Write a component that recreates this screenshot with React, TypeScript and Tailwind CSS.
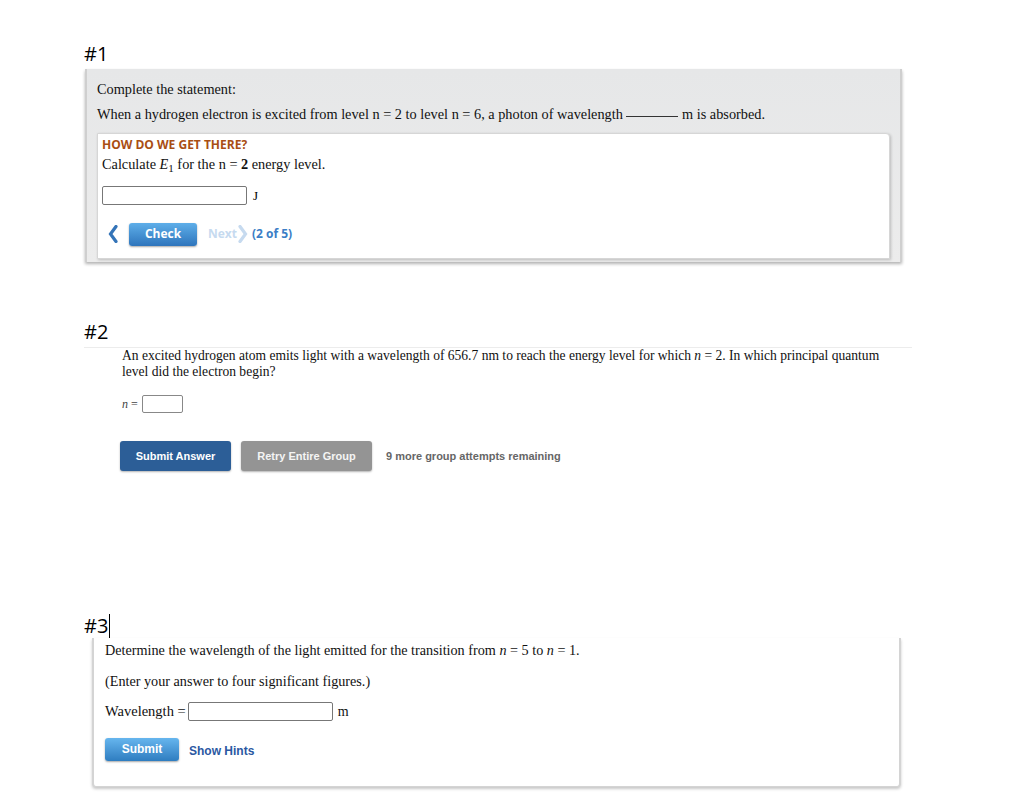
import React from "react";

const serif = { fontFamily: '"Liberation Serif", "Times New Roman", serif' };

function ChevronLeft({ color, className }: { color: string; className?: string }) {
  return (
    <svg viewBox="0 0 10 18" width="10" height="18" className={className}>
      <path d="M8 1.5 L2.5 9 L8 16.5" fill="none" stroke={color} strokeWidth="3.2" strokeLinejoin="miter" strokeLinecap="round" />
    </svg>
  );
}

function ChevronRight({ color, className }: { color: string; className?: string }) {
  return (
    <svg viewBox="0 0 10 18" width="10" height="18" className={className}>
      <path d="M2 1.5 L7.5 9 L2 16.5" fill="none" stroke={color} strokeWidth="3.2" strokeLinejoin="miter" strokeLinecap="round" />
    </svg>
  );
}

export default function App() {
  return (
    <div className="w-[1024px] h-[810px] bg-white overflow-hidden text-black" style={{ fontFamily: '"Liberation Sans", Arial, sans-serif' }}>
      {/* #1 */}
      <div className="pt-[42px] pl-[84px]">
        <div className="text-[20px] leading-[24px] font-['Open_Sans',sans-serif]">#1</div>
        <div className="mt-[3px] ml-[1px] w-[817px] h-[193px] bg-gradient-to-b from-[#e6e7e8] to-[#ececec] border-l-2 border-r-2 border-[#cfcfcf] shadow-[0_2px_3px_rgba(0,0,0,0.3)] pl-[10px] pr-[10px] pt-[10px] flex flex-col">
          <div className="text-[14.3px] leading-[20px] text-[#111]" style={serif}>Complete the statement:</div>
          <div className="mt-[5px] text-[14.3px] leading-[20px] text-[#111] whitespace-nowrap" style={serif}>
            When a hydrogen electron is excited from level n = 2 to level n = 6, a photon of wavelength{" "}
            <span className="inline-block w-[52px] border-b border-[#333] align-baseline translate-y-[-2px]"></span>{" "}
            m is absorbed.
          </div>
          <div className="mt-[9px] h-[126px] bg-white border border-[#d6d6d6] rounded-tr-[4px] shadow-[1px_1px_3px_rgba(0,0,0,0.2)] pl-[4px] pt-[4px]">
            <div className="text-[12px] leading-[14px] font-bold text-[#a94e13] font-['Open_Sans',sans-serif]">HOW DO WE GET THERE?</div>
            <div className="mt-[3px] text-[14.3px] leading-[18px] text-[#111]" style={serif}>
              Calculate <i>E</i><sub className="text-[11px]">1</sub> for the n = <b>2</b> energy level.
            </div>
            <div className="mt-[13px] flex items-center gap-[6px]">
              <div className="w-[145px] h-[19px] border border-[#777] rounded-[2px] bg-white"></div>
              <span className="text-[13px]" style={serif}>J</span>
            </div>
            <div className="mt-[17px] flex items-center">
              <ChevronLeft color="#3474b8" className="ml-[6px]" />
              <div className="ml-[11px] w-[68px] h-[23px] rounded-[3px] bg-gradient-to-b from-[#5eaee9] to-[#2e75bc] shadow-[0_1px_2px_rgba(0,0,0,0.35)] flex items-center justify-center text-white text-[12px] font-bold font-['Open_Sans',sans-serif]">
                Check
              </div>
              <span className="ml-[11px] text-[12px] font-bold text-[#c6daef] font-['Open_Sans',sans-serif]">Next</span>
              <ChevronRight color="#c6daef" className="ml-[1px]" />
              <span className="ml-[4px] text-[12px] font-bold text-[#3b7ec6] font-['Open_Sans',sans-serif]">(2 of 5)</span>
            </div>
          </div>
        </div>
      </div>

      {/* #2 */}
      <div className="mt-[58px] pl-[84px]">
        <div className="text-[20px] leading-[24px] font-['Open_Sans',sans-serif]">#2</div>
        <div className="mt-[3px] w-[828px] border-t border-[#ececec]"></div>
        <div className="pl-[38px]">
          <div className="w-[775px] text-[13.55px] leading-[16px] text-[#111]" style={serif}>
            An excited hydrogen atom emits light with a wavelength of 656.7 nm to reach the energy level for which <i>n</i> = 2. In which principal quantum level did the electron begin?
          </div>
          <div className="mt-[15px] flex items-center gap-[3px]">
            <span className="text-[12px] text-[#444]" style={serif}><i>n</i> =</span>
            <div className="ml-[1px] w-[41px] h-[18px] border border-[#888] rounded-[2px] bg-white"></div>
          </div>
          <div className="mt-[28px] flex items-center ml-[-2px]">
            <div className="w-[111px] h-[30px] rounded-[3px] bg-[#2c5e97] shadow-[0_1px_2px_rgba(0,0,0,0.3)] flex items-center justify-center text-white text-[11px] font-bold">
              Submit Answer
            </div>
            <div className="ml-[10px] w-[131px] h-[30px] rounded-[3px] bg-[#949494] shadow-[0_1px_2px_rgba(0,0,0,0.3)] flex items-center justify-center text-[#f4f4f4] text-[11px] font-bold">
              Retry Entire Group
            </div>
            <span className="ml-[14px] text-[11px] font-bold text-[#666]">9 more group attempts remaining</span>
          </div>
        </div>
      </div>

      {/* #3 */}
      <div className="mt-[143px] pl-[84px]">
        <div className="flex items-center h-[24px]">
          <span className="text-[20px] leading-[24px] font-['Open_Sans',sans-serif]">#3</span>
          <span className="ml-[1px] w-px h-[24px] bg-black"></span>
        </div>
        <div className="ml-[8px] w-[809px] h-[149px] bg-white border-l-2 border-r-2 border-b border-[#d4d4d4] rounded-b-[4px] shadow-[0_2px_3px_rgba(0,0,0,0.22)] pl-[11px] pt-[2px]">
          <div className="text-[14.2px] leading-[20px] text-[#111]" style={serif}>
            Determine the wavelength of the light emitted for the transition from <i>n</i> = 5 to <i>n</i> = 1.
          </div>
          <div className="mt-[11px] text-[14.2px] leading-[20px] text-[#111]" style={serif}>
            (Enter your answer to four significant figures.)
          </div>
          <div className="mt-[10px] flex items-center">
            <span className="text-[14.5px] text-[#111]" style={serif}>Wavelength =</span>
            <div className="ml-[2px] w-[145px] h-[19px] border border-[#777] rounded-[2px] bg-white"></div>
            <span className="ml-[5px] text-[14px] text-[#111]" style={serif}>m</span>
          </div>
          <div className="mt-[15px] flex items-center">
            <div className="w-[74px] h-[23px] rounded-[3px] bg-gradient-to-b from-[#66b6ee] to-[#2e7dc0] shadow-[0_1px_2px_rgba(0,0,0,0.35)] flex items-center justify-center text-white text-[12px] font-bold">
              Submit
            </div>
            <span className="ml-[10px] mt-[3px] text-[12px] font-bold text-[#2a58a2]">Show Hints</span>
          </div>
        </div>
      </div>
    </div>
  );
}
